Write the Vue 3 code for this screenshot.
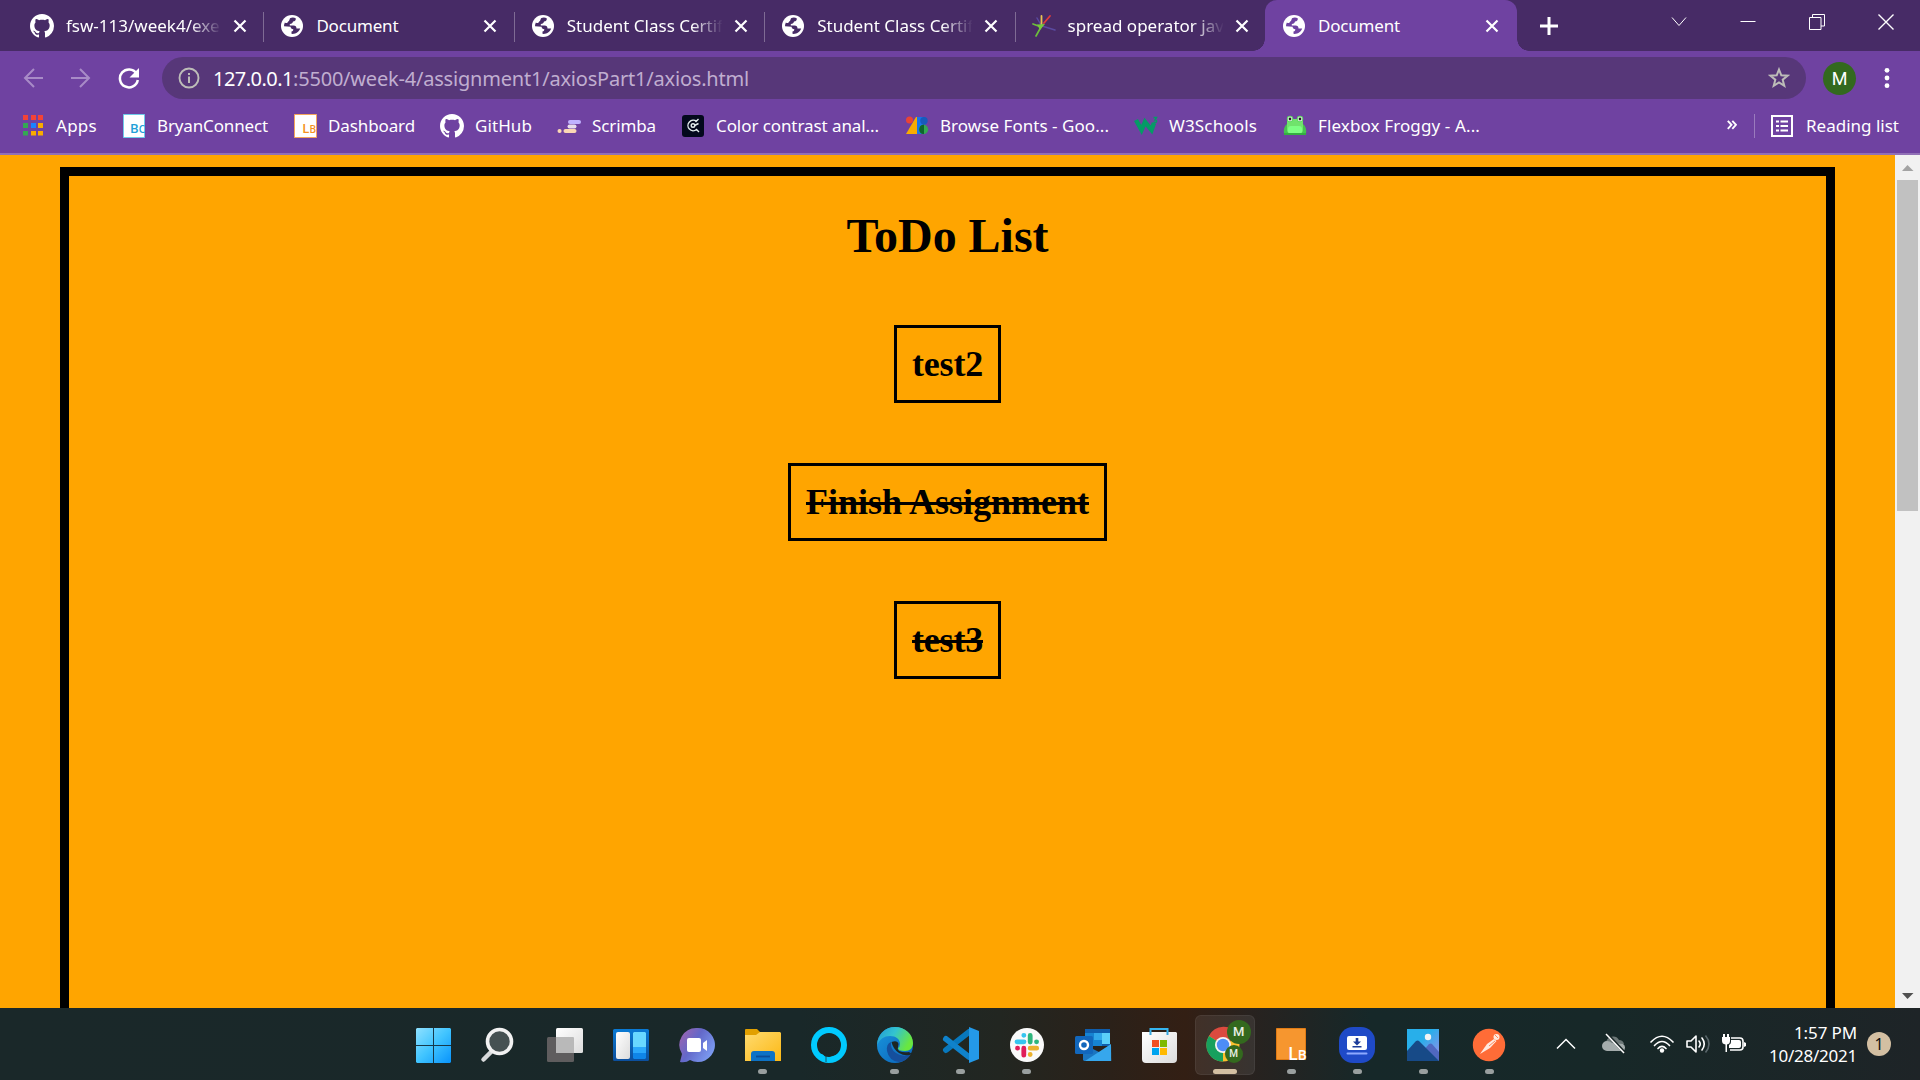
<script setup>
const tabs = [
  { icon: 'github', title: 'fsw-113/week4/exercise', w: 0, fade: true },
  { icon: 'globe', title: 'Document', w: 82 },
  { icon: 'globe', title: 'Student Class Certificate', w: 0, fade: true },
  { icon: 'globe', title: 'Student Class Certificate', w: 0, fade: true },
  { icon: 'burst', title: 'spread operator javascript', w: 0, fade: true },
  { icon: 'globe', title: 'Document', w: 82, active: true },
]

const bookmarks = [
  { icon: 'apps', title: 'Apps', w: 41, slot: 101 },
  { icon: 'bc', title: 'BryanConnect', w: 111, slot: 171, badge: ['B', 'c'], color: '#219fd8' },
  { icon: 'lb', title: 'Dashboard', w: 87, slot: 147, badge: ['L', 'b'], color: '#f59120' },
  { icon: 'github', title: 'GitHub', w: 57, slot: 117 },
  { icon: 'scrimba', title: 'Scrimba', w: 64, slot: 124 },
  { icon: 'contrast', title: 'Color contrast anal...', w: 163, slot: 224 },
  { icon: 'fonts', title: 'Browse Fonts - Goo...', w: 169, slot: 229 },
  { icon: 'w3', title: 'W3Schools', w: 88, slot: 149 },
  { icon: 'frog', title: 'Flexbox Froggy - A...', w: 162, slot: 210 },
]

const todos = [
  { title: 'test2', done: false, w: 71 },
  { title: 'Finish Assignment', done: true, w: 283 },
  { title: 'test3', done: true, w: 71 },
]

const apps = [
  { id: 'start' }, { id: 'search' }, { id: 'taskview' }, { id: 'widgets' }, { id: 'chat' },
  { id: 'explorer', open: true }, { id: 'alexa' }, { id: 'edge', open: true },
  { id: 'vscode', open: true }, { id: 'slack', open: true }, { id: 'outlook' }, { id: 'store' },
  { id: 'chrome', open: true, active: true }, { id: 'lockdown', open: true },
  { id: 'update', open: true }, { id: 'photos', open: true }, { id: 'postman', open: true },
]

// Spaces the letters so that a label occupies the given width.
const vFit = {
  mounted(el, { value }) {
    if (!value) return
    const natural = el.getBoundingClientRect().width
    el.style.letterSpacing = (value - natural) / el.textContent.length + 'px'
  },
}
</script>

<template>
  <div class="desktop">
    <svg class="defs" width="0" height="0">
      <symbol id="i-github" viewBox="0 0 16 16">
        <path fill="#fff" d="M8 0C3.58 0 0 3.58 0 8c0 3.54 2.29 6.53 5.47 7.59.4.07.55-.17.55-.38 0-.19-.01-.82-.01-1.49-2.01.37-2.53-.49-2.69-.94-.09-.23-.48-.94-.82-1.13-.28-.15-.68-.52-.01-.53.63-.01 1.08.58 1.23.82.72 1.21 1.87.87 2.33.66.07-.52.28-.87.51-1.07-1.78-.2-3.64-.89-3.64-3.95 0-.87.31-1.59.82-2.15-.08-.2-.36-1.02.08-2.12 0 0 .67-.21 2.2.82.64-.18 1.32-.27 2-.27s1.36.09 2 .27c1.53-1.04 2.2-.82 2.2-.82.44 1.1.16 1.92.08 2.12.51.56.82 1.27.82 2.15 0 3.07-1.87 3.75-3.65 3.95.29.25.54.73.54 1.48 0 1.07-.01 1.93-.01 2.2 0 .21.15.46.55.38A8.01 8.01 0 0 0 16 8c0-4.42-3.58-8-8-8z" />
      </symbol>
      <symbol id="i-burst" viewBox="0 0 24 24">
        <g stroke-linecap="round" stroke-width="1.500" fill="none">
          <path stroke="#5a4aa0" d="M9 11 5 4M10 12l13 4" />
          <path stroke="#e8c352" stroke-width="1.800" d="M9.500 10V2" />
          <path stroke="#e13c3c" stroke-width="1.800" d="m12 9 6-7" />
          <path stroke="#6cbf3b" stroke-width="1.700" d="m1 10 8 3-5 9" />
        </g>
        <path fill="#78c83c" d="m5 10.500 8-.5-5 6z" />
      </symbol>
      <symbol id="i-apps" viewBox="0 0 24 24">
        <g fill="#f44336"><path d="M2 1h5v5H2zM10 1h5v5h-5zM17 1h5v5h-5z" /></g>
        <path fill="#34a853" d="M2 9h5v5H2zM2 17h5v4.500H2z" /><path fill="#1a82ff" d="M10 9h5v5h-5z" />
        <path fill="#f9ab00" d="M17 9h5v5h-5zM10 17h5v4.500h-5zM17 17h5v4.500h-5z" />
      </symbol>
      <symbol id="i-bc" viewBox="0 0 24 24"><path fill="#fff" stroke="#6fcbea" d="M1.500.5h21v23h-21z" /></symbol>
      <symbol id="i-lb" viewBox="0 0 24 24"><path fill="#fff" stroke="#f4a55c" d="M1.500.5h22v23h-22z" /></symbol>
      <symbol id="i-scrimba" viewBox="0 0 24 24">
        <g stroke-width="4" stroke-linecap="round">
          <path stroke="#c0b3ff" d="M13 8h9" /><path stroke="#e6ddeb" d="M12.500 12.500h5" />
          <path stroke="#fbd8b4" d="M8.500 17h9" /><path stroke="#fbd8b4" d="M2.500 17h.1" />
        </g>
      </symbol>
      <symbol id="i-contrast" viewBox="0 0 24 24">
        <rect x="1" y="1" width="22" height="22" rx="3" fill="#03091c" />
        <g fill="none" stroke="#e4efee" stroke-width="1.400">
          <path d="M15.500 7.500a5.200 5.200 0 1 0 0 8M14.500 8l3-3M15 15l3 3" /><circle cx="12" cy="11.500" r="1.800" /><path d="m13.500 11.500 4-2" />
        </g>
      </symbol>
      <symbol id="i-fonts" viewBox="0 0 24 24">
        <path fill="#f9ab00" d="M11 3h2v17H1z" /><path fill="#1a73e8" d="M12 3h7v17h-7z" />
        <circle cx="4.500" cy="6" r="3.500" fill="#ea4335" /><path fill="#1967d2" d="M18 3a4 4 0 0 1 0 8z" />
        <circle cx="19" cy="6.700" r="3.700" fill="#185abc" />
        <circle cx="18.500" cy="15.500" r="4.700" fill="#34a853" /><path fill="#0d652d" d="M19 10.800V20h-1a4.700 4.700 0 0 1 0-9.200z" />
      </symbol>
      <symbol id="i-w3" viewBox="0 0 24 24">
        <path fill="none" stroke="#059b66" stroke-width="4.500" d="m2 6 5.500 10L11 8l6.500 8L20 9" />
        <path fill="none" stroke="#059b66" stroke-width="1.500" d="M19.500 3.500h3L21 6q2 0 1.500 1.700-1 1.300-3 .3" />
      </symbol>
      <symbol id="i-frog" viewBox="0 0 24 24">
        <path fill="#45c450" d="M1 20q-1-7 3-10h16q4 3 3 10z" /><rect x="4" y="5" width="16" height="14" rx="3" fill="#70e36c" />
        <rect x="5" y="12" width="14" height="8" rx="3" fill="#7dff83" />
        <circle cx="7" cy="5" r="3.200" fill="#62d866" /><circle cx="17" cy="5" r="3.200" fill="#62d866" />
        <circle cx="7" cy="5" r="2.200" fill="#fff" /><circle cx="17" cy="5" r="2.200" fill="#fff" />
        <circle cx="7" cy="5" r="1.400" fill="#222" /><circle cx="17" cy="5" r="1.400" fill="#222" />
        <path fill="#34ae42" d="M1 19h22v2H1z" />
      </symbol>

      <linearGradient id="g-win" x1="0" y1="0" x2="1" y2="1"><stop stop-color="#8fe1ff" /><stop offset=".5" stop-color="#40c4ff" /><stop offset="1" stop-color="#0893fb" /></linearGradient>
      <linearGradient id="g-white" x1="0" y1="0" x2="1" y2="1"><stop stop-color="#fff" /><stop offset="1" stop-color="#dcdcdc" /></linearGradient>
      <linearGradient id="g-blue" x1="0" y1="0" x2="0" y2="1"><stop stop-color="#0a7ad4" /><stop offset="1" stop-color="#0c4f9d" /></linearGradient>
      <linearGradient id="g-chat" x1="0" y1="0" x2="1" y2=".6"><stop stop-color="#a763ab" /><stop offset=".5" stop-color="#6368c9" /><stop offset="1" stop-color="#7b9af0" /></linearGradient>
      <linearGradient id="g-folder" x1="0" y1="0" x2="1" y2="1"><stop stop-color="#ffdb70" /><stop offset="1" stop-color="#fcb814" /></linearGradient>
      <linearGradient id="g-edge" x1="0" y1="0" x2="1" y2=".4"><stop stop-color="#2197d5" /><stop offset=".5" stop-color="#33c3d0" /><stop offset="1" stop-color="#69e73f" /></linearGradient>
      <linearGradient id="g-edge2" x1="0" y1="0" x2="1" y2="1"><stop stop-color="#1a97dd" /><stop offset="1" stop-color="#0961b9" /></linearGradient>
      <linearGradient id="g-photo" x1="0" y1="0" x2="1" y2="1"><stop offset=".4" stop-color="#28afea" /><stop offset="1" stop-color="#a189e8" /></linearGradient>

      <symbol id="a-start" viewBox="0 0 40 40"><path fill="url(#g-win)" d="M3 4l1-1h33l1 1v33l-1 1H4l-1-1z" /><path stroke="#17394a" d="M20.500 3v35M3 20.500h35" /></symbol>
      <symbol id="a-search" viewBox="0 0 40 40"><path stroke="#d8dadb" stroke-width="4.500" stroke-linecap="round" d="m4.500 34.500 8-8" /><circle cx="20.500" cy="16.500" r="12" fill="#465152" stroke="#f2f2f2" stroke-width="3.600" /></symbol>
      <symbol id="a-taskview" viewBox="0 0 40 40"><rect x="2" y="12" width="27" height="25" rx="1.500" fill="#5f5d5e" /><rect x="11" y="3" width="27" height="25" rx="1.500" fill="url(#g-white)" /><path fill="#b9b9b9" d="M11 12h17q1 0 1 1v15H12q-1 0-1-1z" /></symbol>
      <symbol id="a-widgets" viewBox="0 0 40 40"><rect x="2" y="4" width="36" height="32" rx="1.500" fill="url(#g-blue)" /><rect x="5" y="7" width="14" height="27" rx="2" fill="url(#g-white)" /><path fill="#69d8ff" d="M23 7h11l1 1v14H22V8z" /><path fill="#2ba8fb" d="M22 22h13v6H22z" /><path fill="#0f85e8" d="M22 28h13v5l-1 1H23l-1-1z" /></symbol>
      <symbol id="a-chat" viewBox="0 0 40 40"><path fill="url(#g-chat)" d="M20 3a17 17 0 1 1-7 32q-4 3-10 2l2-8A17 17 0 0 1 20 3z" /><rect x="10" y="13" width="14" height="14" rx="2" fill="#fff" /><path fill="#fff" d="m26 18 4-3v11l-4-3z" /></symbol>
      <symbol id="a-explorer" viewBox="0 0 40 40"><path fill="#e2a000" d="M2 5q0-1 1-1h11l4 4-3 4H2z" /><path fill="url(#g-folder)" d="M2 10h11l4-3h20l1 1v28H2z" /><path fill="#0d72c5" d="M8 36V29q0-3 3-3h18q3 0 3 3v7z" /><path stroke="#0b4c96" stroke-width="1.800" d="M13 31.500h14" /></symbol>
      <symbol id="a-alexa" viewBox="0 0 40 40"><circle cx="20" cy="20" r="15" fill="none" stroke="#00caff" stroke-width="6" /><path fill="#00caff" d="m5 28 8 1q4 2 4 8z" /><path fill="#00caff" d="M17 37q1-4 4-5l9-3-5 8z" /><path stroke="#19383d" stroke-width=".8" d="M17 31v6" /></symbol>
      <symbol id="a-edge" viewBox="0 0 40 40"><circle cx="20" cy="20" r="18" fill="url(#g-edge2)" /><path fill="#154f9d" d="M16 17q-5 2-4 9 2 10 12 11 8-1 12-8-8 4-15-1-6-4-5-11z" /><path fill="url(#g-edge)" d="M2 20C3 9 10 2 20 2s18 7 18 16c0 5-3 8-8 8q-7 0-7-3 2-1 2-4c0-5-4-8-10-8Q6 11 2 20z" /><path fill="#1d2624" d="M16.500 17q6-2 7 2l-.5 3q-1 2 1 4 5 2 10 1l3 2q-6 3-13-1-6-4-7.500-11z" /></symbol>
      <symbol id="a-vscode" viewBox="0 0 40 40"><path stroke="#0878bd" stroke-width="6" stroke-linecap="round" stroke-linejoin="round" d="M5 25 28 7" /><path stroke="#0f82cb" stroke-width="6" stroke-linecap="round" d="m5 14 23 18" /><path fill="#2499e8" d="m28 2 10 4v28l-10 4z" /></symbol>
      <symbol id="a-slack" viewBox="0 0 40 40"><circle cx="20" cy="20" r="17" fill="#fafafa" /><g stroke-width="4.800" stroke-linecap="round"><path stroke="#36c5f0" d="M10 16.800h7M16.800 10.300h.1" /><path stroke="#2eb67d" d="M23.200 10.500v6.500M29.500 16.800h.1" /><path stroke="#e01e5a" d="M16.800 23.200v7M10.500 23.200h.1" /><path stroke="#ecb22e" d="M23.200 23.200h6.500M23.200 29.500v.1" /></g></symbol>
      <symbol id="a-outlook" viewBox="0 0 40 40"><path fill="#0f5dac" d="M12 4h25v17H12z" /><path fill="#1683d2" d="M12 8h17v13H12z" /><path fill="#31a8ea" d="M21 8h8v7h-8z" /><path fill="#5bd0f9" d="M29 8h8v11h-8z" /><path fill="#1b75bf" d="m10 19 16 8-2 9H11l-1-1z" /><path fill="#36a7ed" d="m38 19 .2 17H12z" /><rect x="2" y="11" width="18" height="18" rx="1.500" fill="#1267bc" /><circle cx="11" cy="20" r="4" fill="none" stroke="#fff" stroke-width="2.400" /></symbol>
      <symbol id="a-store" viewBox="0 0 40 40"><path fill="none" stroke="#35b5f0" stroke-width="2" d="M11.500 9V4h17v5" /><path fill="url(#g-white)" d="M3 7h34l1 1v26q0 4-4 4H7q-4 0-4-4z" /><path stroke="#35a5df" stroke-width="2" d="M11.500 7v3M28.500 7v3" /><path fill="#f25022" d="M13 15h7v7h-7z" /><path fill="#7fba00" d="M21 15h7v7h-7z" /><path fill="#00a4ef" d="M13 23h7v7h-7z" /><path fill="#ffb900" d="M21 23h7v7h-7z" /></symbol>
      <symbol id="a-chrome" viewBox="0 0 54 54"><circle cx="24" cy="27" r="16.500" fill="#fbc02d" /><path fill="#db4a3f" d="M24 27 10 18a16.500 16.500 0 0 1 29-1L34 22z" /><path fill="#17a05e" d="m24 27-14-9a16.500 16.500 0 0 0 14 25.500z" /><circle cx="24" cy="27" r="8" fill="#f4f4f4" /><circle cx="24" cy="27" r="6.200" fill="#4d8df6" /></symbol>
      <symbol id="a-lockdown" viewBox="0 0 40 40"><path fill="#f6962f" stroke="#e07b15" d="M5.500 3.500h29v31h-29z" /></symbol>
      <symbol id="a-update" viewBox="0 0 40 40"><rect x="2" y="2" width="36" height="36" rx="14" fill="#1f4ac7" /><rect x="10" y="11" width="20" height="14" rx="2" fill="#fff" /><path fill="#1b3b9a" d="M18.700 13h2.600v3.500h2.700l-4 4-4-4h2.700zM15.500 21h9v1.500h-9z" /><path stroke="#8ea9ff" stroke-width="2" stroke-linecap="round" d="M10.500 28.500h19" /></symbol>
      <symbol id="a-photos" viewBox="0 0 40 40"><path fill="url(#g-photo)" d="M4 4h32v32H4z" /><path fill="#5068c0" d="m20 26 6-7q2-1 3 0l7 8v9H20z" /><path fill="#174a87" d="m4 26 9-10q2-1 3 0l20 20H4z" /><circle cx="25" cy="12" r="3.200" fill="#f0f4f4" /></symbol>
      <symbol id="a-postman" viewBox="0 0 40 40"><circle cx="20" cy="20" r="16.200" fill="#ff6c37" /><circle cx="27.500" cy="12" r="3" fill="#ffe9de" /><path fill="#ffe9de" d="m25 14 2.500 2-6.500 7-10 6 7-10z" /><path stroke="#ff6c37" stroke-width=".8" d="m20 21 6-5M26 10l3 3" /></symbol>
    </svg>

    <header class="tabstrip">
      <div v-for="(t, i) in tabs" :key="i" class="tab" :class="{ active: t.active, before: i === 4 }">
        <svg v-if="t.icon === 'globe'" class="favicon" width="24" height="24" viewBox="0 0 24 24">
          <circle cx="12" cy="12" r="11" fill="#fff" />
          <path class="land" d="M10 4.200c2-.9 4-.8 5.700 0 .5 1.900-.7 3.300-2.700 3.300-.3 1.700-1.200 2.300-3.200 2.400v1.600h3.700c2 .1 3 1.200 3 2.900h3.700c-.9 3-3.900 5.400-7.700 5.500l-1-.1v-2.200c1.300-.4 1.900-1.200 1.800-2.400-1.700 0-2.600-.8-2.700-2.400L4 12.200c0-1.400.3-2.600.9-3.600 1.200.8 2.300.7 2.800-.4.400-.9 1.300-1.200 1.300-1.200z" />
        </svg>
        <svg v-else class="favicon" width="24" height="24"><use :href="'#i-' + t.icon" /></svg>
        <span class="tab-title" :class="{ fade: t.fade }"><span v-fit="t.w" class="fit">{{ t.title }}</span></span>
        <svg class="close" width="14" height="14" viewBox="0 0 14 14"><path d="m1.500 1.500 11 11m0-11-11 11" stroke="#fff" stroke-width="2.200" /></svg>
      </div>
      <svg class="newtab" width="20" height="20" viewBox="0 0 20 20"><path d="M10 1v18M1 10h18" stroke="#fff" stroke-width="3" /></svg>
      <div class="winctl">
        <svg width="16" height="16" viewBox="0 0 16 16"><path d="m1 3.500 7 8 7-8" /></svg>
        <svg width="16" height="16" viewBox="0 0 16 16"><path d="M.5 7.500h15" /></svg>
        <svg width="16" height="16" viewBox="0 0 16 16"><path d="M.5 3.500h11.500v12H.5zM3.500 3.500V.5h12v11.500h-3.500" /></svg>
        <svg width="16" height="16" viewBox="0 0 16 16"><path class="x" d="m.5.500 15 15m0-15-15 15" /></svg>
      </div>
    </header>

    <div class="toolbar">
      <svg class="nav" width="22" height="22" viewBox="0 0 22 22"><path d="M21 11H3m9-9-9 9 9 9" /></svg>
      <svg class="nav" width="22" height="22" viewBox="0 0 22 22"><path d="M1 11h18m-9-9 9 9-9 9" /></svg>
      <svg class="reload" width="22" height="22" viewBox="0 0 22 22"><path d="M18.500 6.500A9 9 0 1 0 19.800 13" fill="none" stroke="#fff" stroke-width="2.500" /><path d="M21 1v9.500h-9.500z" fill="#fff" /></svg>
      <div class="omnibox">
        <svg width="22" height="22" viewBox="0 0 22 22"><circle cx="11" cy="11" r="9.500" fill="none" stroke="#bdbdb8" stroke-width="1.900" /><path d="M10 9.500h2V16h-2zM10 6h2v2h-2z" fill="#bdbdb8" /></svg>
        <span class="url"><span v-fit="80" class="fit host">127.0.0.1</span><span v-fit="456" class="fit">:5500/week-4/assignment1/axiosPart1/axios.html</span></span>
        <svg class="star" width="22" height="22" viewBox="0 0 22 22"><path fill="none" stroke="#bdbdb8" stroke-width="2" d="m11 2.500 2.300 5.800 6.300.4-4.900 4 1.600 6.200L11 15.500l-5.300 3.400 1.600-6.200-4.900-4 6.300-.4z" /></svg>
      </div>
      <div class="avatar">M</div>
      <svg class="menu" width="6" height="22" viewBox="0 0 6 22"><g fill="#fff"><circle cx="3" cy="3.300" r="2.400" /><circle cx="3" cy="11" r="2.400" /><circle cx="3" cy="18.700" r="2.400" /></g></svg>
    </div>

    <nav class="bookmarks">
      <div v-for="b in bookmarks" :key="b.title" class="bookmark" :style="{ width: b.slot + 'px' }">
        <span class="mark">
          <svg width="24" height="24"><use :href="'#i-' + b.icon" /></svg>
          <span v-if="b.badge" class="monogram" :style="{ color: b.color }">{{ b.badge[0] }}<small>{{ b.badge[1] }}</small></span>
        </span>
        <span v-fit="b.w" class="fit">{{ b.title }}</span>
      </div>
      <svg class="more" width="10" height="10" viewBox="0 0 10 10"><path d="m.8.800 3.700 4-3.700 4M5.300.800l3.700 4-3.700 4" fill="none" stroke="#fff" stroke-width="1.900" /></svg>
      <i class="rule"></i>
      <svg class="reading" width="22" height="22" viewBox="0 0 22 22"><path fill="none" stroke="#fff" stroke-width="2" d="M1 1h20v20H1z" /><path fill="#fff" d="M5 5.500h3v2H5zM9.500 5.500H17v2H9.500zM5 10h3v2H5zM9.500 10H17v2H9.500zM5 14.500h3v2H5zM9.500 14.500H17v2H9.500z" /></svg>
      <span v-fit="93" class="fit">Reading list</span>
    </nav>

    <main class="page">
      <div class="canvas">
        <section class="frame">
          <h1><span v-fit="202" class="fit">ToDo List</span></h1>
          <div v-for="t in todos" :key="t.title" class="todo" :class="{ done: t.done }">
            <span v-fit="t.w" class="fit">{{ t.title }}</span>
          </div>
        </section>
      </div>
      <aside class="scrollbar">
        <svg width="25" height="25" viewBox="0 0 25 25"><path fill="#a3a3a3" d="M7 16h11.500L12.500 10z" /></svg>
        <div class="thumb"></div>
        <svg class="down" width="25" height="25" viewBox="0 0 25 25"><path fill="#505050" d="M7 10h11.500L12.500 16z" /></svg>
      </aside>
    </main>

    <footer class="taskbar">
      <div class="apps">
        <div v-for="a in apps" :key="a.id" class="app" :class="{ open: a.open, current: a.active }">
          <svg :width="a.active ? 54 : 40" :height="a.active ? 54 : 40"><use :href="'#a-' + a.id" /></svg>
          <template v-if="a.active">
            <span class="profile large">M</span>
            <span class="profile small">M</span>
          </template>
          <span v-if="a.id === 'lockdown'" class="monogram big">L<small>b</small></span>
        </div>
      </div>
      <div class="tray">
        <svg class="up" width="20" height="12" viewBox="0 0 20 12"><path d="m1 10.500 9-9 9 9" fill="none" stroke="#fff" stroke-width="1.500" /></svg>
        <svg class="cloud" width="26" height="22" viewBox="0 0 26 22"><path fill="#6c7777" d="M5 10a7 7 0 0 1 13-3q4 0 5 4l-8 3z" /><path fill="#a4acac" d="M6 18a5 5 0 0 1 0-10q3 0 5 2l11 1a4 4 0 0 1 0 7z" /><path stroke="#1a2727" stroke-width="3" d="m6 1 18 19" /><path stroke="#fff" stroke-width="1.500" d="m5 1 18 19" /></svg>
        <svg class="wifi" width="26" height="20" viewBox="0 0 26 20"><g fill="none" stroke="#fff" stroke-width="1.700" stroke-linecap="round"><path d="M2 8Q13-3.500 24 8M5.500 11.500q7.500-8 15 0M9 14.500q4-4.200 8 0" /></g><circle cx="13" cy="16.500" r="2.200" fill="#fff" /></svg>
        <svg class="sound" width="26" height="22" viewBox="0 0 26 22"><path fill="none" stroke="#fff" stroke-width="1.600" stroke-linejoin="round" d="M2 8h4l5-5v16l-5-5H2z" /><path fill="none" stroke="#fff" stroke-width="1.600" stroke-linecap="round" d="M14 8q2.500 3 0 6M17 5q4.500 6 0 12" /><path fill="none" stroke="#59666a" stroke-width="1.600" d="M20.500 2.500q7 8.500 0 17" /></svg>
        <svg class="battery" width="26" height="22" viewBox="0 0 26 22"><path fill="none" stroke="#fff" stroke-width="1.600" d="M10 5h9q3 0 3 3v6q0 3-3 3H9" /><path fill="#fff" d="M10 7h8q2 0 2 2v4q0 2-2 2H8v-3q2-1 2-3zM23 9l2 1v3l-2 1zM1 4h8v4q0 3-3 3.500V19H4.500v-7.500Q1 11 1 8zM2 1h2v4H2zM6 1h2v4H6z" /></svg>
        <div class="clock">
          <div><span v-fit="63" class="fit">1:57 PM</span></div>
          <div><span v-fit="88" class="fit">10/28/2021</span></div>
        </div>
        <div class="count">1</div>
      </div>
    </footer>
  </div>
</template>

<style>
html, body { margin: 0; overflow: hidden; background: #ffa500; }
</style>

<style scoped>
.desktop { width: 1920px; height: 1080px; display: flex; flex-direction: column; overflow: hidden; font-family: "Noto Sans", "Open Sans", sans-serif; font-size: 17px; color: #fff; }
.defs { position: absolute; }
.fit { display: inline-block; white-space: nowrap; }
svg { flex: none; display: block; }
.monogram { position: absolute; right: 1px; bottom: 1px; font: 600 13px/15px "Open Sans", sans-serif; text-transform: uppercase; }
.monogram small { font-size: 10px; }
.monogram.big { right: 17px; bottom: 14px; font-size: 18px; line-height: 22px; }
.monogram.big small { font-size: 13.500px; }

.tabstrip { height: 51px; flex: none; display: flex; align-items: center; background: #472b66; padding-left: 14px; }
.tab { width: 250.400px; height: 51px; box-sizing: border-box; flex: none; display: flex; align-items: center; padding-left: 16px; position: relative; line-height: 24px; }
.tab::after { content: ""; position: absolute; right: 0; top: 12px; width: 1px; height: 30px; background: #7f6b94; }
.tab.active { background: #6f42a1; border-radius: 12px 12px 0 0; margin-left: -1px; padding-left: 17px; width: 252px; }
.tab.active .land { fill: #6f42a1; }
.tab.active::after, .tab.before::after { display: none; }
.tab.active::before { content: ""; position: absolute; left: -12px; right: -12px; bottom: 0; height: 12px; background: radial-gradient(circle at 0 0, transparent 11.500px, #6f42a1 12px) left / 12px 12px no-repeat, radial-gradient(circle at 100% 0, transparent 11.500px, #6f42a1 12px) right / 12px 12px no-repeat; }
.tab-title { width: 155px; margin-left: 12px; overflow: hidden; white-space: nowrap; }
.tab-title.fade { -webkit-mask-image: linear-gradient(90deg, #000 124px, transparent 156px); mask-image: linear-gradient(90deg, #000 124px, transparent 156px); }
.close { margin-left: 12px; }
.land { fill: #472b66; }
.newtab { margin-left: 22px; }
.winctl { margin-left: auto; margin-right: 26px; margin-bottom: 8px; display: flex; gap: 53px; }
.winctl path { fill: none; stroke: #fff; stroke-width: 1; }
.winctl .x { stroke-width: 1.400; }

.toolbar { height: 54px; flex: none; display: flex; align-items: center; background: #6f42a1; padding-left: 22px; box-sizing: border-box; }
.nav { margin-right: 26px; }
.nav path { fill: none; stroke: #a88bc7; stroke-width: 2; }
.reload { margin-right: 22px; }
.omnibox { width: 1644px; height: 42px; box-sizing: border-box; border-radius: 21px; background: #573779; display: flex; align-items: center; padding: 0 16px; }
.url { margin-left: 13px; font-size: 20px; color: #c0aed0; white-space: nowrap; display: flex; }
.host { color: #fff; }
.star { margin-left: auto; }
.avatar { width: 33px; height: 33px; border-radius: 50%; background: #33691e; margin-left: 17px; text-align: center; font: 18px/34px Roboto, sans-serif; }
.menu { margin-left: 28px; }

.bookmarks { height: 50px; flex: none; display: flex; align-items: flex-start; padding: 9px 21px 0 21px; box-sizing: border-box; background: #6f42a1; border-bottom: 2px solid #9170b6; line-height: 24px; }
.bookmark { display: flex; align-items: center; flex: none; gap: 12px; }
.bookmark .fit { margin-left: -1px; }
.mark { position: relative; width: 24px; height: 24px; }
.more { margin: 6px 17px 0 auto; }
.rule { width: 1px; height: 24px; background: #9a7bbd; margin-right: 16px; }
.reading { margin: 1px 13px 0 0; }

.page { height: 853px; flex: none; display: flex; background: #ffa500; color: #000; font-family: "Liberation Serif", "Times New Roman", serif; }
.canvas { flex: 1; overflow: hidden; padding: 12px 60px 0; height: 853px; box-sizing: border-box; }
.frame { height: 1200px; border: 9px solid #000; box-sizing: border-box; display: flex; flex-direction: column; align-items: center; gap: 60px; }
h1 { margin: 35px 0 4px; font-size: 48px; line-height: 50px; font-weight: 700; }
.todo { height: 78px; box-sizing: border-box; border: 3px solid #000; padding: 15px; font-size: 36px; line-height: 43px; font-weight: 700; }
.done .fit { text-decoration: line-through; text-decoration-thickness: 3px; }
.scrollbar { width: 25px; background: #f1f1f1; display: flex; flex-direction: column; align-items: center; }
.thumb { width: 21px; height: 331px; background: #c1c1c1; }
.down { margin-top: auto; }

.taskbar { height: 72px; flex: none; display: flex; padding-left: 399px; background: linear-gradient(90deg, #1a2829 0, #192829 800px, #222621 1000px, #2b2119 1110px, #331f14 1185px, #28221f 1250px, #162829 1370px, #172828 1600px, #1e2427 1920px); }
.apps { display: flex; }
.app { width: 66.060px; height: 72px; flex: none; position: relative; display: flex; justify-content: center; padding: 17px 0 0 1px; box-sizing: border-box; }
.app.open::after { content: ""; position: absolute; bottom: 6px; left: 29px; width: 9px; height: 5px; border-radius: 2.500px; background: #999f9f; }
.app.current { padding: 10px 0 0 3px; }
.app.current::before { content: ""; position: absolute; left: 3px; top: 7px; width: 60px; height: 60px; box-sizing: border-box; border-radius: 6px; background: rgba(255, 255, 255, .08); border: 1px solid rgba(255, 255, 255, .06); }
.app.current svg { position: relative; }
.app.current::after { left: 21px; width: 24px; background: #d3bfa2; }
.profile { position: absolute; border-radius: 50%; background: #33691e; color: #e8efe5; text-align: center; font-family: Roboto, sans-serif; font-weight: 500; }
.profile.large { left: 35px; top: 12px; width: 24px; height: 24px; font-size: 13px; line-height: 24px; }
.profile.small { left: 33px; top: 37px; width: 18px; height: 18px; font-size: 10px; line-height: 18px; }
.tray { margin-left: auto; margin-right: 29px; display: flex; align-items: center; }
.tray svg { margin-bottom: 1px; }
.cloud { margin-left: 25px; }
.wifi { margin-left: 22px; }
.sound { margin-left: 10px; }
.battery { margin-left: 10px; }
.clock { width: 110px; text-align: right; font-size: 17px; line-height: 23px; }
.count { width: 24px; height: 24px; margin-left: 10px; border-radius: 50%; background: #d3bfa2; color: #111; text-align: center; font-size: 16px; line-height: 24px; }
</style>
